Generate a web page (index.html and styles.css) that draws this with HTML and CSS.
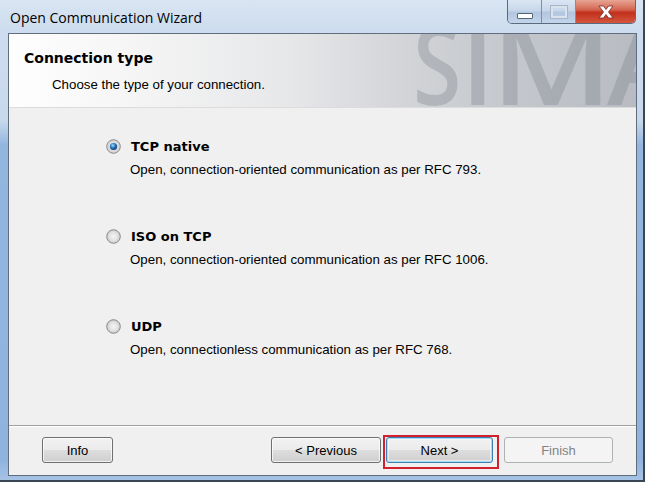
FILE: index.html
```html
<!DOCTYPE html>
<html>
<head>
<meta charset="utf-8">
<link rel="stylesheet" href="styles.css">
</head>
<body>
<div class="window">
  <div class="titlebar">
    <div class="title">Open Communication Wizard</div>
    <div class="caption-buttons">
      <div class="cap cap-min"><span class="min-glyph"></span></div>
      <div class="cap cap-max"><span class="max-glyph"></span></div>
      <div class="cap cap-close">
        <svg width="20" height="14" viewBox="0 0 20 14"><path d="M3 1 H7.5 L10 4.5 L12.5 1 H17 L12.5 7 L17 13 H12.5 L10 9.5 L7.5 13 H3 L7.5 7 Z" fill="#fff" stroke="#7a2a22" stroke-width="0.8"/></svg>
      </div>
    </div>
  </div>
  <div class="client">
    <div class="header">
      <div class="watermark" aria-hidden="true"><span class="wm wm-s">S</span><span class="wm wm-i">I</span><span class="wm wm-m">M</span><span class="wm wm-a">A</span></div>
      <div class="header-title">Connection type</div>
      <div class="header-sub">Choose the type of your connection.</div>
    </div>
    <div class="body">
      <div class="option">
        <div class="option-row">
          <svg class="radio" width="15" height="15" viewBox="0 0 15 15">
            <defs>
              <radialGradient id="rg1" cx="50%" cy="50%" r="50%"><stop offset="0" stop-color="#f4f4f4"/><stop offset="1" stop-color="#cfcfcf"/></radialGradient>
              <radialGradient id="dot" cx="40%" cy="35%" r="65%"><stop offset="0" stop-color="#a9dcf9"/><stop offset="0.5" stop-color="#2b7ec4"/><stop offset="1" stop-color="#0d3a6b"/></radialGradient>
            </defs>
            <circle cx="7.5" cy="7.5" r="6.8" fill="url(#rg1)" stroke="#8b8b8b" stroke-width="1"/>
            <circle cx="7.5" cy="7.5" r="3.6" fill="url(#dot)"/>
          </svg>
          <span class="option-title">TCP native</span>
        </div>
        <div class="option-desc">Open, connection-oriented communication as per RFC 793.</div>
      </div>
      <div class="option">
        <div class="option-row">
          <svg class="radio" width="15" height="15" viewBox="0 0 15 15">
            <defs>
              <radialGradient id="rg2" cx="50%" cy="50%" r="50%"><stop offset="0" stop-color="#f4f4f4"/><stop offset="0.6" stop-color="#e2e2e2"/><stop offset="1" stop-color="#c8c8c8"/></radialGradient>
            </defs>
            <circle cx="7.5" cy="7.5" r="6.8" fill="url(#rg2)" stroke="#8b8b8b" stroke-width="1"/>
          </svg>
          <span class="option-title">ISO on TCP</span>
        </div>
        <div class="option-desc">Open, connection-oriented communication as per RFC 1006.</div>
      </div>
      <div class="option">
        <div class="option-row">
          <svg class="radio" width="15" height="15" viewBox="0 0 15 15">
            <circle cx="7.5" cy="7.5" r="6.8" fill="url(#rg2)" stroke="#8b8b8b" stroke-width="1"/>
          </svg>
          <span class="option-title">UDP</span>
        </div>
        <div class="option-desc">Open, connectionless communication as per RFC 768.</div>
      </div>
    </div>
    <div class="footer">
      <div class="btn btn-info">Info</div>
      <div class="nav-buttons">
        <div class="btn btn-nav">&lt; Previous</div>
        <div class="highlight"><div class="btn btn-default">Next &gt;</div></div>
        <div class="btn btn-finish btn-disabled">Finish</div>
      </div>
    </div>
  </div>
</div>
</body>
</html>
```

FILE: styles.css
```css
html, body {
  margin: 0;
  padding: 0;
}
body {
  width: 645px;
  height: 482px;
  overflow: hidden;
  font-family: "Liberation Sans", Arial, sans-serif;
  font-size: 13.3px;
  color: #000;
}
.window {
  width: 645px;
  height: 482px;
  box-sizing: border-box;
  display: flex;
  flex-direction: column;
  background: linear-gradient(to bottom, #d9e5f2 0px, #cddcee 30px, #c9d9ec 120px, #93b6df 145px, #8fb3de 460px, #a9c4e6 482px);
  border-right: 2px solid #3a4654;
  border-bottom: 2px solid #3a4654;
}
.titlebar {
  height: 33px;
  display: flex;
  align-items: flex-start;
  justify-content: space-between;
  flex-shrink: 0;
}
.title {
  font-family: "Open Sans", "Noto Sans", sans-serif;
  font-size: 14px;
  line-height: 16px;
  padding: 10px 0 0 10px;
  color: #000;
}
.caption-buttons {
  display: flex;
  margin-right: 7px;
  height: 23px;
  border: 1px solid #5a6b80;
  border-top: none;
  border-radius: 0 0 5px 5px;
  overflow: hidden;
}
.cap {
  height: 23px;
  display: flex;
  align-items: center;
  justify-content: center;
  box-sizing: border-box;
}
.cap-min, .cap-max {
  width: 34px;
  background: linear-gradient(to bottom, #dbe6f3 0%, #c8d7ea 45%, #b2c6df 55%, #c3d5ea 100%);
  border-right: 1px solid #7d90a8;
}
.min-glyph {
  width: 14px;
  height: 4px;
  margin-top: 8px;
  background: #fff;
  border: 1px solid #536579;
  border-radius: 1px;
}
.max-glyph {
  width: 12px;
  height: 8px;
  border: 2px solid #d9e3ee;
  outline: 1px solid #a6b6c8;
}
.cap-close {
  width: 59px;
  background: linear-gradient(to bottom, #e8a493 0%, #d46a55 40%, #c2301c 55%, #d4563e 100%);
}
.client {
  flex: 1;
  margin: 0 6px 4px 8px;
  border: 1px solid #5f6d7c;
  background: #f0f0f0;
  display: flex;
  flex-direction: column;
  min-height: 0;
}
.header {
  position: relative;
  overflow: hidden;
  height: 73px;
  flex-shrink: 0;
  background: linear-gradient(to right, #fefefe 0%, #f6f6f6 18%, #e6e7e9 45%, #d3d5d8 62%, #c4c7cc 80%, #b8bbc1 100%);
  border-bottom: 1px solid #dcdcdc;
}
.watermark {
  position: absolute;
  left: 404px;
  top: -27px;
  display: flex;
  font-family: "Open Sans", "Noto Sans", sans-serif;
  font-weight: 600;
  font-size: 110px;
  line-height: 110px;
  color: rgba(118, 124, 134, 0.32);
  white-space: nowrap;
}
.wm {
  display: inline-block;
  transform-origin: left top;
}
.wm-s {
  width: 48px;
  transform: scaleX(0.8);
}
.wm-i {
  width: 30px;
}
.wm-m {
  width: 116px;
  transform: scaleX(1.2);
}
.wm-a {
  width: 80px;
  transform: scaleX(1.05);
}
.header-title {
  position: relative;
  font-family: "DejaVu Sans", sans-serif;
  font-weight: bold;
  font-size: 14px;
  line-height: 16px;
  padding: 16px 0 0 15px;
}
.header-sub {
  position: relative;
  line-height: 16px;
  padding: 11px 0 0 43px;
}
.body {
  flex: 1;
  padding: 29px 0 0 97px;
  display: flex;
  flex-direction: column;
  gap: 48px;
}
.option-row {
  display: flex;
  align-items: center;
  height: 18px;
}
.radio {
  flex-shrink: 0;
}
.option-title {
  font-family: "DejaVu Sans", sans-serif;
  font-weight: bold;
  font-size: 13px;
  margin-left: 10px;
}
.option-desc {
  margin: 6px 0 0 24px;
  line-height: 18px;
}
.footer {
  height: 50px;
  flex-shrink: 0;
  border-top: 1px solid #a0a0a0;
  box-shadow: inset 0 1px 0 #ffffff;
  display: flex;
  align-items: flex-start;
  justify-content: space-between;
  padding: 11px 23px 0 33px;
  box-sizing: border-box;
}
.btn {
  height: 26px;
  box-sizing: border-box;
  border: 1px solid #707070;
  border-radius: 3px;
  background: linear-gradient(to bottom, #f2f2f2 0%, #ebebeb 48%, #dddddd 52%, #cfcfcf 100%);
  box-shadow: inset 0 0 0 1px rgba(255,255,255,0.7);
  display: flex;
  align-items: center;
  justify-content: center;
  font-size: 13px;
}
.btn-info {
  width: 71px;
}
.nav-buttons {
  display: flex;
  align-items: flex-start;
}
.btn-nav {
  width: 110px;
}
.highlight {
  border: 2px solid #d3202e;
  padding: 0 4px 4px 1px;
  margin: -2px 5px 0 2px;
}
.btn-default {
  width: 107px;
  border-color: #3c7fb1;
  box-shadow: inset 0 0 0 1px #a8dcf6, inset 0 0 0 2px rgba(255,255,255,0.5);
}
.btn-finish {
  width: 109px;
}
.btn-disabled {
  border-color: #adb2b5;
  background: #f4f4f4;
  box-shadow: none;
  color: #838383;
}
```
